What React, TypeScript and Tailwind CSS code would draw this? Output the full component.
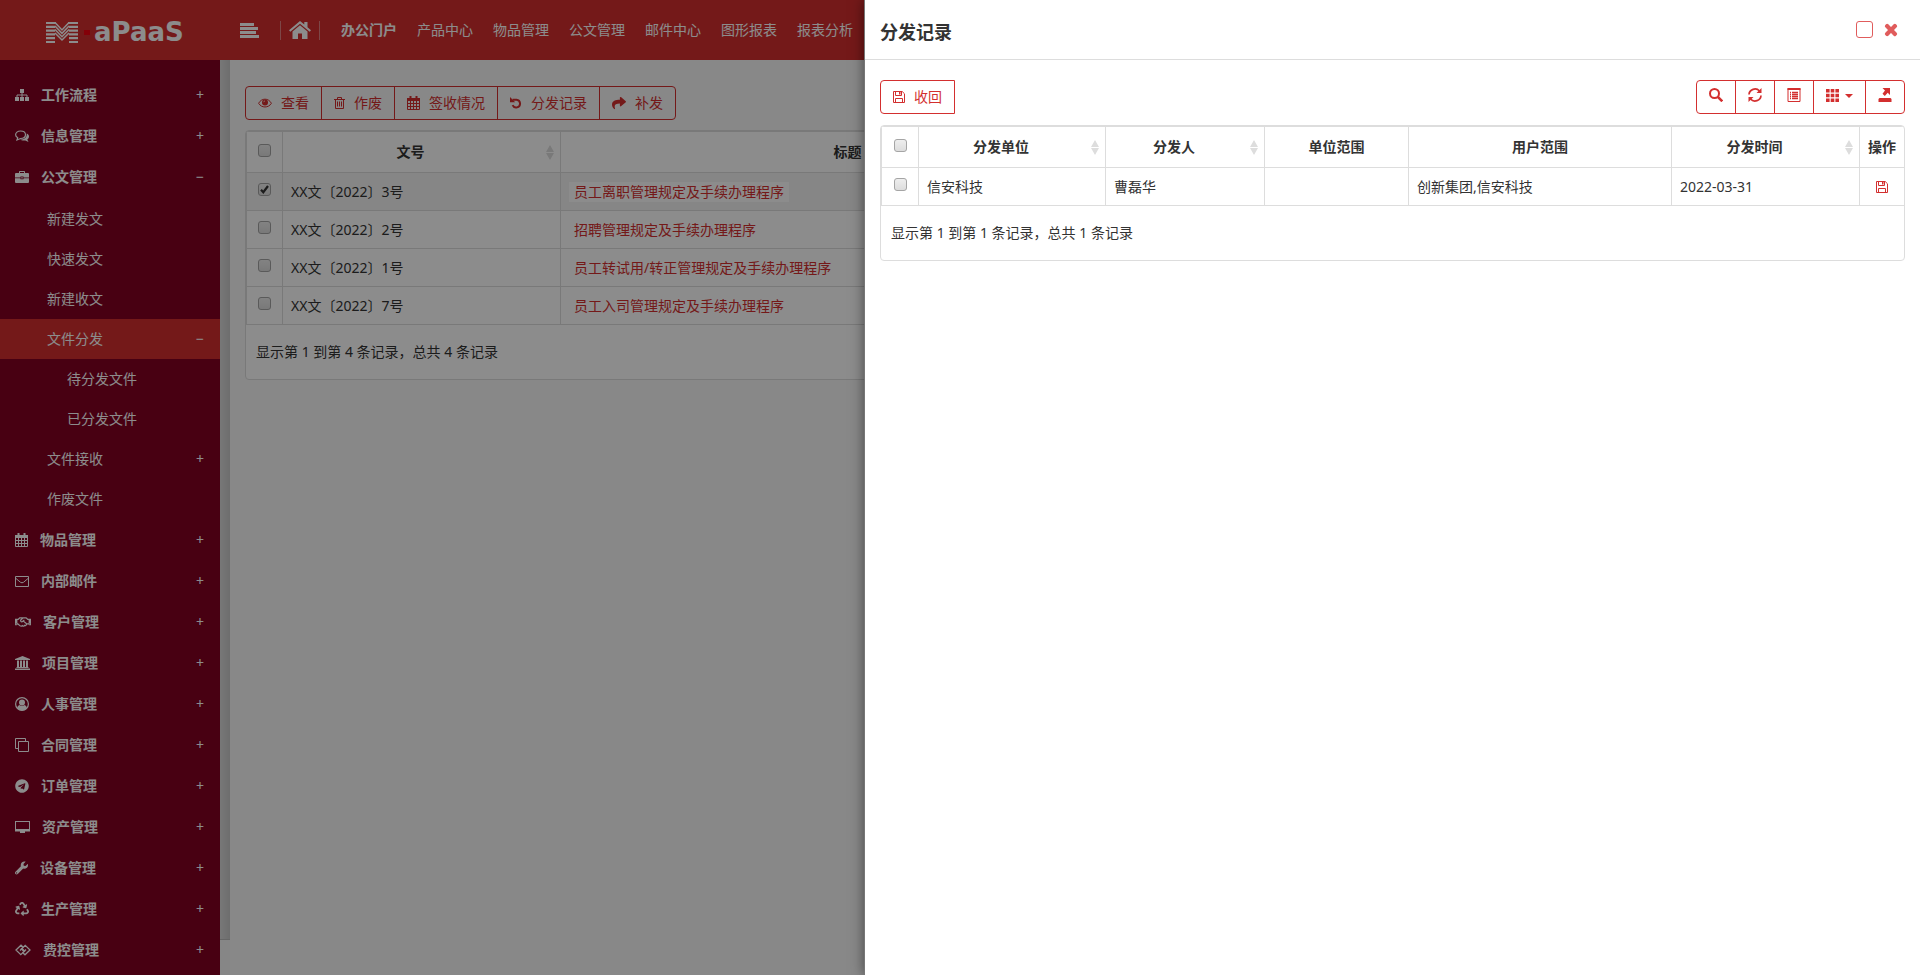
import { useState } from "react";
import type { ComponentType, ReactNode } from "react";
import { FaRecycle, FaRegHandshake, FaShare, FaTelegram, FaTimes, FaWrench } from "react-icons/fa";

type IconProps = { className?: string };

function SitemapIcon({ className }: IconProps) {
  return (
    <svg viewBox="0 0 14 14" className={className} fill="currentColor">
      <path d="M5 1h4v4H5z M0 9h4v4H0z M5 9h4v4H5z M10 9h4v4h-4z" />
      <path d="M7 5v4 M2 9V7h10v2" fill="none" stroke="currentColor" />
    </svg>
  );
}

function CommentsIcon({ className }: IconProps) {
  return (
    <svg viewBox="0 0 14 14" className={className}>
      <path d="M5.500 2C8.500 2 10.500 3.700 10.500 5.800S8.500 9.500 5.500 9.500L2 11l.7-2.200C1.300 8 .6 7 .6 5.800.6 3.700 2.600 2 5.500 2z" fill="none" stroke="currentColor" strokeWidth="1.200" />
      <path d="M11.700 4.500C13.200 5.200 14 6.300 14 7.500c0 1.200-.7 2.200-1.700 2.900L13.500 13 10.300 11.500C8 11.800 6.200 11.300 5.200 10.600 9 10.600 12.200 8.500 11.700 4.500z" fill="currentColor" />
    </svg>
  );
}

function BriefcaseIcon({ className }: IconProps) {
  return (
    <svg viewBox="0 0 14 14" className={className} fill="currentColor">
      <path d="M4 3V1.700Q4 1 4.700 1h4.600q.7 0 .7.700V3h3q1 0 1 1v3.500H8.500v-1h-3v1H0V4q0-1 1-1z M5 3h4V2H5z" fillRule="evenodd" />
      <path d="M0 8.300h5.500v1h3v-1H14V12q0 1-1 1H1q-1 0-1-1z M6.300 7.300h1.400v1.200H6.300z" />
    </svg>
  );
}

function EnvelopeIcon({ className }: IconProps) {
  return (
    <svg viewBox="0 0 14 14" className={className} fill="none" stroke="currentColor">
      <path d="M.500 2.500h13v10H.500z M1 4.500l4.500 3.800q1.500 1 3 0L13 4.500" />
    </svg>
  );
}

function BankIcon({ className }: IconProps) {
  return (
    <svg viewBox="0 0 15 14" className={className} fill="currentColor">
      <path d="M7.500 0 15 3v1H0V3z M2 4.500h2V11h1V4.500h2V11h1V4.500h2V11h1V4.500h2V11h.500v1h-12v-1H2z M0 12.500h15V14H0z" />
    </svg>
  );
}

function UserIcon({ className }: IconProps) {
  return (
    <svg viewBox="0 0 14 14" className={className} fill="currentColor">
      <circle cx="7" cy="7" r="6.400" fill="none" stroke="currentColor" strokeWidth="1.200" />
      <circle cx="7" cy="5.500" r="3" />
      <path d="M2 11.300Q2.500 8.200 4.500 8 7 9.700 9.500 8q2 .2 2.500 3.300Q10 13.500 7 13.500T2 11.300z" />
    </svg>
  );
}

function CloneIcon({ className }: IconProps) {
  return (
    <svg viewBox="0 0 14 14" className={className} fill="none" stroke="currentColor">
      <path d="M3.500 3.500h10v10h-10z M3 10.500H.500V.500h10V3" />
    </svg>
  );
}

function DesktopIcon({ className }: IconProps) {
  return (
    <svg viewBox="0 0 15 14" className={className} fill="currentColor">
      <path d="M0 1h15v10.500h-5V13H5v-1.500H0z M1 2v7h13V2z" fillRule="evenodd" />
    </svg>
  );
}

function CalendarIcon({ className }: IconProps) {
  return (
    <svg viewBox="0 0 13 14" className={className} fill="none" stroke="currentColor">
      <path d="M.5 2.500h12v11H.5z M.5 7.500h12 M.5 10.500h12 M3.500 5v8.500 M6.500 5v8.500 M9.500 5v8.500" />
      <path d="M0 3.500h13" strokeWidth="3" />
      <path d="M3.500 0v3 M9.500 0v3" strokeWidth="2" />
    </svg>
  );
}

function LinkedIcon({ className }: IconProps) {
  return (
    <svg viewBox="0 0 16 12" className={className} fill="none" stroke="currentColor" strokeWidth="1.300">
      <path d="M8.500 3.500 6 1.200 1 6l4.800 4.700L9.500 7 7 4.500 5 6.500" />
      <path d="M7.500 8.500 10 10.800 15 6l-4.800-4.700L6.500 5 9 7.500l2-2" />
    </svg>
  );
}

function EyeIcon({ className }: IconProps) {
  return (
    <svg viewBox="0 0 14 12" className={className} fill="none" stroke="currentColor">
      <path d="M.6 6.300C3.500.800 10.500.800 13.400 6.300 10.500 11.200 3.500 11.200.6 6.300z" />
      <circle cx="7" cy="5.500" r="3" fill="currentColor" stroke="none" />
      <path d="M5.600 5.200q.2-1.200 1.400-1.300" stroke="#fff" strokeWidth=".7" />
    </svg>
  );
}

function TrashIcon({ className }: IconProps) {
  return (
    <svg viewBox="0 0 11 12" className={className} fill="none" stroke="currentColor">
      <path d="M0 2.500h11 M3.500 2.500v-2h4v2 M1.500 2.500v9h8v-9 M3.500 4.500v5 M5.500 4.500v5 M7.500 4.500v5" />
    </svg>
  );
}

function UndoIcon({ className }: IconProps) {
  return (
    <svg viewBox="0 0 12 12" className={className}>
      <path d="M2.500 2.700H6.500a3.900 3.900 0 1 1-3.900 5.500" fill="none" stroke="currentColor" strokeWidth="2" />
      <path d="M0 0v5.200h5.200z" fill="currentColor" />
    </svg>
  );
}

function SaveIcon({ className }: IconProps) {
  return (
    <svg viewBox="0 0 12 12" className={className} fill="none" stroke="currentColor">
      <path d="M.5.500h8.700l2.300 2.300v8.700H.5z M2.500 11.500v-4h7v4 M2.500.500v4h6v-4" />
      <path d="M6 1h1.500v2.500H6z" fill="currentColor" stroke="none" />
    </svg>
  );
}

function HomeIcon({ className }: IconProps) {
  return (
    <svg viewBox="0 0 22 18" className={className} fill="currentColor">
      <path d="M11 0 0 9.200l1.300 1.500L11 2.700l9.700 8 1.300-1.500-3.500-3V1h-3.200v2.500z" />
      <path d="M11 4.300 3.500 10.500V18H9v-5.500h4V18h5.500v-7.500z" />
    </svg>
  );
}

function Logo() {
  return (
    <svg viewBox="0 0 32 21" className="h-[21px] w-8" fill="none" stroke="currentColor">
      <path
        d="M0 1h10 M22 1h10 M0 4.800h9 M23 4.800h9 M0 8.600h9 M23 8.600h9 M0 12.400h9 M23 12.400h9 M0 16.200h9 M23 16.200h9 M0 20h9 M23 20h9"
        strokeWidth="2.200"
      />
      <path
        d="M9 .500 16 8l7-7.500 M9 4l7 7.300L23 4 M9 7.500l7 7.200 7-7.200 M9 11l7 7 7-7"
        strokeWidth="1.500"
      />
    </svg>
  );
}

type MenuItem = {
  label: string;
  icon?: ComponentType<IconProps>;
  size?: string;
  mark?: string;
  active?: boolean;
  children?: MenuItem[];
};

const menu: MenuItem[] = [
  { label: "工作流程", icon: SitemapIcon, size: "w-3.5", mark: "+" },
  { label: "信息管理", icon: CommentsIcon, size: "w-3.5", mark: "+" },
  {
    label: "公文管理",
    icon: BriefcaseIcon,
    size: "w-3.5",
    mark: "−",
    children: [
      { label: "新建发文" },
      { label: "快速发文" },
      { label: "新建收文" },
      { label: "文件分发", mark: "−", active: true, children: [{ label: "待分发文件" }, { label: "已分发文件" }] },
      { label: "文件接收", mark: "+" },
      { label: "作废文件" },
    ],
  },
  { label: "物品管理", icon: CalendarIcon, size: "w-[13px]", mark: "+" },
  { label: "内部邮件", icon: EnvelopeIcon, size: "w-3.5", mark: "+" },
  { label: "客户管理", icon: FaRegHandshake, size: "w-4", mark: "+" },
  { label: "项目管理", icon: BankIcon, size: "w-[15px]", mark: "+" },
  { label: "人事管理", icon: UserIcon, size: "w-3.5", mark: "+" },
  { label: "合同管理", icon: CloneIcon, size: "w-3.5", mark: "+" },
  { label: "订单管理", icon: FaTelegram, size: "w-3.5", mark: "+" },
  { label: "资产管理", icon: DesktopIcon, size: "w-[15px]", mark: "+" },
  { label: "设备管理", icon: FaWrench, size: "w-[13px]", mark: "+" },
  { label: "生产管理", icon: FaRecycle, size: "w-3.5", mark: "+" },
  { label: "费控管理", icon: LinkedIcon, size: "w-4", mark: "+" },
];

const navLinks = ["办公门户", "产品中心", "物品管理", "公文管理", "邮件中心", "图形报表", "报表分析"];

const documents = [
  { no: "XX文〔2022〕3号", title: "员工离职管理规定及手续办理程序" },
  { no: "XX文〔2022〕2号", title: "招聘管理规定及手续办理程序" },
  { no: "XX文〔2022〕1号", title: "员工转试用/转正管理规定及手续办理程序" },
  { no: "XX文〔2022〕7号", title: "员工入司管理规定及手续办理程序" },
];

const levelStyles = ["h-[41px] gap-3 pl-[15px] font-bold", "h-10 pl-[47px]", "h-10 pl-[67px]"];

function MenuList({ items, level = 0 }: { items: MenuItem[]; level?: number }) {
  return (
    <ul className={level === 1 ? "pt-0.5" : ""}>
      {items.map(({ label, icon: Icon, size, mark, active, children }) => (
        <li key={label}>
          <a href="#" className={`flex items-center pr-4 ${levelStyles[level]} ${active ? "bg-[#d32f2f]" : ""}`}>
            {Icon && <Icon className={`h-3.5 shrink-0 ${size}`} />}
            <span className="flex-1">{label}</span>
            {mark && <span className="font-normal">{mark}</span>}
          </a>
          {children && <MenuList items={children} level={level + 1} />}
        </li>
      ))}
    </ul>
  );
}

function Header() {
  return (
    <header className="flex h-[60px] shrink-0 items-center bg-[#d32f2f] text-white">
      <a href="#" className="flex w-[220px] items-center pt-1 pl-[46px]">
        <Logo />
        <span className="ml-1.5 h-[5px] w-1.5 bg-[#f00010]" />
        <span className="ml-1 font-['DejaVu_Sans',sans-serif] text-[26px] leading-none font-bold">aPaaS</span>
      </a>
      <button type="button" aria-label="折叠菜单" className="ml-5">
        <svg viewBox="0 0 19 15" className="h-[15px] w-[19px]" fill="currentColor">
          <path d="M0 0h14v3H0z M0 4h18v3H0z M0 8h16v3H0z M0 12h19v3H0z" />
        </svg>
      </button>
      <a href="#" aria-label="首页" className="ml-[21px] flex h-[19px] items-center border-x border-white/40 px-2">
        <HomeIcon className="h-[18px] w-[22px]" />
      </a>
      <nav className="ml-[21px] flex gap-5 whitespace-nowrap">
        {navLinks.map((link, i) => (
          <a key={link} href="#" className={i === 0 ? "font-bold" : ""}>
            {link}
          </a>
        ))}
      </nav>
    </header>
  );
}

function ToolButton({ icon, children }: { icon: ReactNode; children: ReactNode }) {
  return (
    <button
      type="button"
      className="-ml-px flex h-[34px] items-center gap-[9px] border border-[#d32f2f] px-3 text-[#d32f2f] first:ml-0 first:rounded-l last:rounded-r"
    >
      {icon}
      {children}
    </button>
  );
}

function Check({ label, checked = false }: { label: string; checked?: boolean }) {
  const [on, setOn] = useState(checked);
  return (
    <span className="relative mx-auto mb-1 block h-[13px] w-[13px]">
      <input
        type="checkbox"
        aria-label={label}
        checked={on}
        onChange={() => setOn(!on)}
        className="block h-[13px] w-[13px] appearance-none rounded-[3px] border border-[#a5a5a5] bg-linear-to-b from-[#eee] to-[#ddd]"
      />
      {on && (
        <svg viewBox="0 0 13 13" className="pointer-events-none absolute inset-0" fill="none" stroke="#333" strokeWidth="2.200">
          <path d="M3 6.700 5.300 9.200 10 3" />
        </svg>
      )}
    </span>
  );
}

function Th({ children, sortable }: { children: ReactNode; sortable?: boolean }) {
  return (
    <th className={`relative border border-[#ddd] font-bold ${sortable ? "pr-[22px]" : ""}`}>
      {children}
      {sortable && (
        <svg viewBox="0 0 8 15" className="absolute top-[13px] right-1.5 h-[15px] w-2" fill="#ddd">
          <path d="M4 0 8 7H0z M0 8h8l-4 7z" />
        </svg>
      )}
    </th>
  );
}

function Panel({ children, total }: { children: ReactNode; total: number }) {
  return (
    <div className="overflow-hidden rounded border border-[#ddd] bg-white">
      {children}
      <p className="flex h-[54px] items-center px-2.5">
        显示第 {total > 0 ? 1 : 0} 到第 {total} 条记录，总共 {total} 条记录
      </p>
    </div>
  );
}

function DocumentList() {
  return (
    <main className="min-w-0 flex-1 bg-[#f8f8f8] px-[15px] pt-[26px]">
      <div className="mb-2.5 flex">
        <ToolButton icon={<EyeIcon className="h-3 w-3.5" />}>查看</ToolButton>
        <ToolButton icon={<TrashIcon className="h-3 w-[11px]" />}>作废</ToolButton>
        <ToolButton icon={<CalendarIcon className="h-3.5 w-[13px]" />}>签收情况</ToolButton>
        <ToolButton icon={<UndoIcon className="h-3 w-3" />}>分发记录</ToolButton>
        <ToolButton icon={<FaShare className="h-3.5 w-3.5" />}>补发</ToolButton>
      </div>
      <Panel total={4}>
        <table className="w-full table-fixed border-collapse">
          <colgroup>
            <col className="w-9" />
            <col className="w-[278px]" />
            <col className="w-[574px]" />
            <col />
          </colgroup>
          <thead>
            <tr className="h-[41px]">
              <Th><Check label="全选" /></Th>
              <Th sortable>文号</Th>
              <Th>标题</Th>
              <td className="border border-[#ddd]" />
            </tr>
          </thead>
          <tbody>
            {documents.map(({ no, title }, i) => (
              <tr key={no} className={`h-[38px] ${i === 0 ? "bg-[#f5f5f5]" : ""}`}>
                <td className="border border-[#ddd]"><Check label={no} checked={i === 0} /></td>
                <td className="border border-[#ddd] px-2">{no}</td>
                <td className="border border-[#ddd] px-2">
                  <a href="#" className="inline-block bg-white px-[5px] leading-5 text-[#d32f2f]">{title}</a>
                </td>
                <td className="border border-[#ddd]" />
              </tr>
            ))}
          </tbody>
        </table>
      </Panel>
    </main>
  );
}

function GridButton({ label, children }: { label: string; children: ReactNode }) {
  return (
    <button
      type="button"
      aria-label={label}
      className="-ml-px flex h-[34px] items-center gap-1.5 border border-[#d32f2f] px-3 pb-1 text-[#d32f2f] first:ml-0 first:rounded-l last:rounded-r"
    >
      {children}
    </button>
  );
}

function RecordDrawer() {
  return (
    <section
      role="dialog"
      aria-label="分发记录"
      className="absolute inset-y-0 right-0 flex w-[55%] flex-col border-l border-[#777] bg-white shadow-[0_0_12px_rgba(0,0,0,0.5)]"
    >
      <div className="flex h-[60px] items-center justify-between border-b border-[#ddd] px-[15px]">
        <h2 className="pt-1 text-lg font-bold">分发记录</h2>
        <div className="flex items-center gap-2.5 pr-1.5 text-[#e05c5c]">
          <button type="button" aria-label="最大化" className="h-[17px] w-[17px] rounded-[3px] border border-current" />
          <button type="button" aria-label="关闭">
            <FaTimes className="h-4 w-4" strokeWidth="40" stroke="currentColor" />
          </button>
        </div>
      </div>
      <div className="px-[15px] pt-5">
        <div className="mb-[11px] flex justify-between">
          <ToolButton icon={<SaveIcon className="h-3 w-3" />}>收回</ToolButton>
          <div className="flex">
            <GridButton label="搜索">
              <svg viewBox="0 0 14 14" className="h-3.5 w-3.5" fill="none" stroke="currentColor" strokeWidth="2">
                <circle cx="5.500" cy="5.500" r="4.500" />
                <path d="m8.800 8.800 4.500 4.500" strokeWidth="2.600" />
              </svg>
            </GridButton>
            <GridButton label="刷新">
              <svg viewBox="0 0 14 14" className="h-3.5 w-3.5" fill="none" stroke="currentColor" strokeWidth="1.700">
                <path d="M1 6.500A6 5.800 0 0 1 11.500 3 M13 7.500A6 5.800 0 0 1 2.500 11" />
                <path d="M13.500 0v5h-5z M.500 14V9h5z" fill="currentColor" stroke="none" />
              </svg>
            </GridButton>
            <GridButton label="切换视图">
              <svg viewBox="0 0 14 14" className="h-3.5 w-3.5" fill="none" stroke="currentColor">
                <path d="M1 .500h12v13H1z" />
                <path d="M.500 1h13" strokeWidth="2" />
                <path d="M3 4.500h1 M5 4.500h6 M3 6.500h1 M5 6.500h6 M3 8.500h1 M5 8.500h6 M3 10.500h1 M5 10.500h6" strokeWidth="1.300" />
              </svg>
            </GridButton>
            <GridButton label="列">
              <svg viewBox="0 0 13 13" className="h-[13px] w-[13px]" fill="currentColor">
                <path d="M0 0h3.600v3.600H0z M4.700 0h3.600v3.600H4.700z M9.400 0H13v3.600H9.400z M0 4.700h3.600v3.600H0z M4.700 4.700h3.600v3.600H4.700z M9.400 4.700H13v3.600H9.400z M0 9.400h3.600V13H0z M4.700 9.400h3.600V13H4.700z M9.400 9.400H13V13H9.400z" />
              </svg>
              <svg viewBox="0 0 8 4" className="mt-0.5 h-1 w-2" fill="currentColor">
                <path d="M0 0h8L4 4z" />
              </svg>
            </GridButton>
            <GridButton label="导出">
              <svg viewBox="0 0 14 14" className="h-3.5 w-3.5" fill="currentColor">
                <path d="M4.500 0H12v7L9.700 4.800 6.800 8 4.500 5.700 7 2.500z M1.500 10h11l1 1v3H.500v-3z" />
              </svg>
            </GridButton>
          </div>
        </div>
        <Panel total={1}>
          <table className="w-full table-fixed border-collapse">
            <colgroup>
              <col className="w-[37px]" />
              <col className="w-[187px]" />
              <col className="w-[159px]" />
              <col className="w-[144px]" />
              <col className="w-[263px]" />
              <col className="w-[188px]" />
              <col className="w-[45px]" />
            </colgroup>
            <thead>
              <tr className="h-[41px]">
                <Th><Check label="全选" /></Th>
                <Th sortable>分发单位</Th>
                <Th sortable>分发人</Th>
                <Th>单位范围</Th>
                <Th>用户范围</Th>
                <Th sortable>分发时间</Th>
                <Th>操作</Th>
              </tr>
            </thead>
            <tbody>
              <tr className="h-[38px]">
                <td className="border border-[#ddd]"><Check label="信安科技" /></td>
                <td className="border border-[#ddd] px-2">信安科技</td>
                <td className="border border-[#ddd] px-2">曹磊华</td>
                <td className="border border-[#ddd] px-2" />
                <td className="border border-[#ddd] px-2">创新集团,信安科技</td>
                <td className="border border-[#ddd] px-2">2022-03-31</td>
                <td className="border border-[#ddd]">
                  <button type="button" aria-label="收回" className="mx-auto block text-[#d32f2f]">
                    <SaveIcon className="h-3 w-3" />
                  </button>
                </td>
              </tr>
            </tbody>
          </table>
        </Panel>
      </div>
    </section>
  );
}

export default function App() {
  return (
    <div className="relative flex h-screen flex-col overflow-hidden font-['Noto_Sans','Noto_Sans_CJK_SC',sans-serif] text-sm text-[#333]">
      <Header />
      <div className="flex min-h-0 flex-1">
        <aside className="w-[220px] shrink-0 overflow-hidden bg-[#830022] pt-3.5 text-white">
          <MenuList items={menu} />
        </aside>
        <div className="flex w-2.5 shrink-0 flex-col">
          <div className="flex-1 bg-linear-to-r from-[#dadada] to-[#c8c8c8]" />
          <div className="h-9 border-t border-[#bbb] bg-[#f5f5f5]" />
        </div>
        <DocumentList />
      </div>
      <div className="absolute inset-0 bg-black/45" />
      <RecordDrawer />
    </div>
  );
}
